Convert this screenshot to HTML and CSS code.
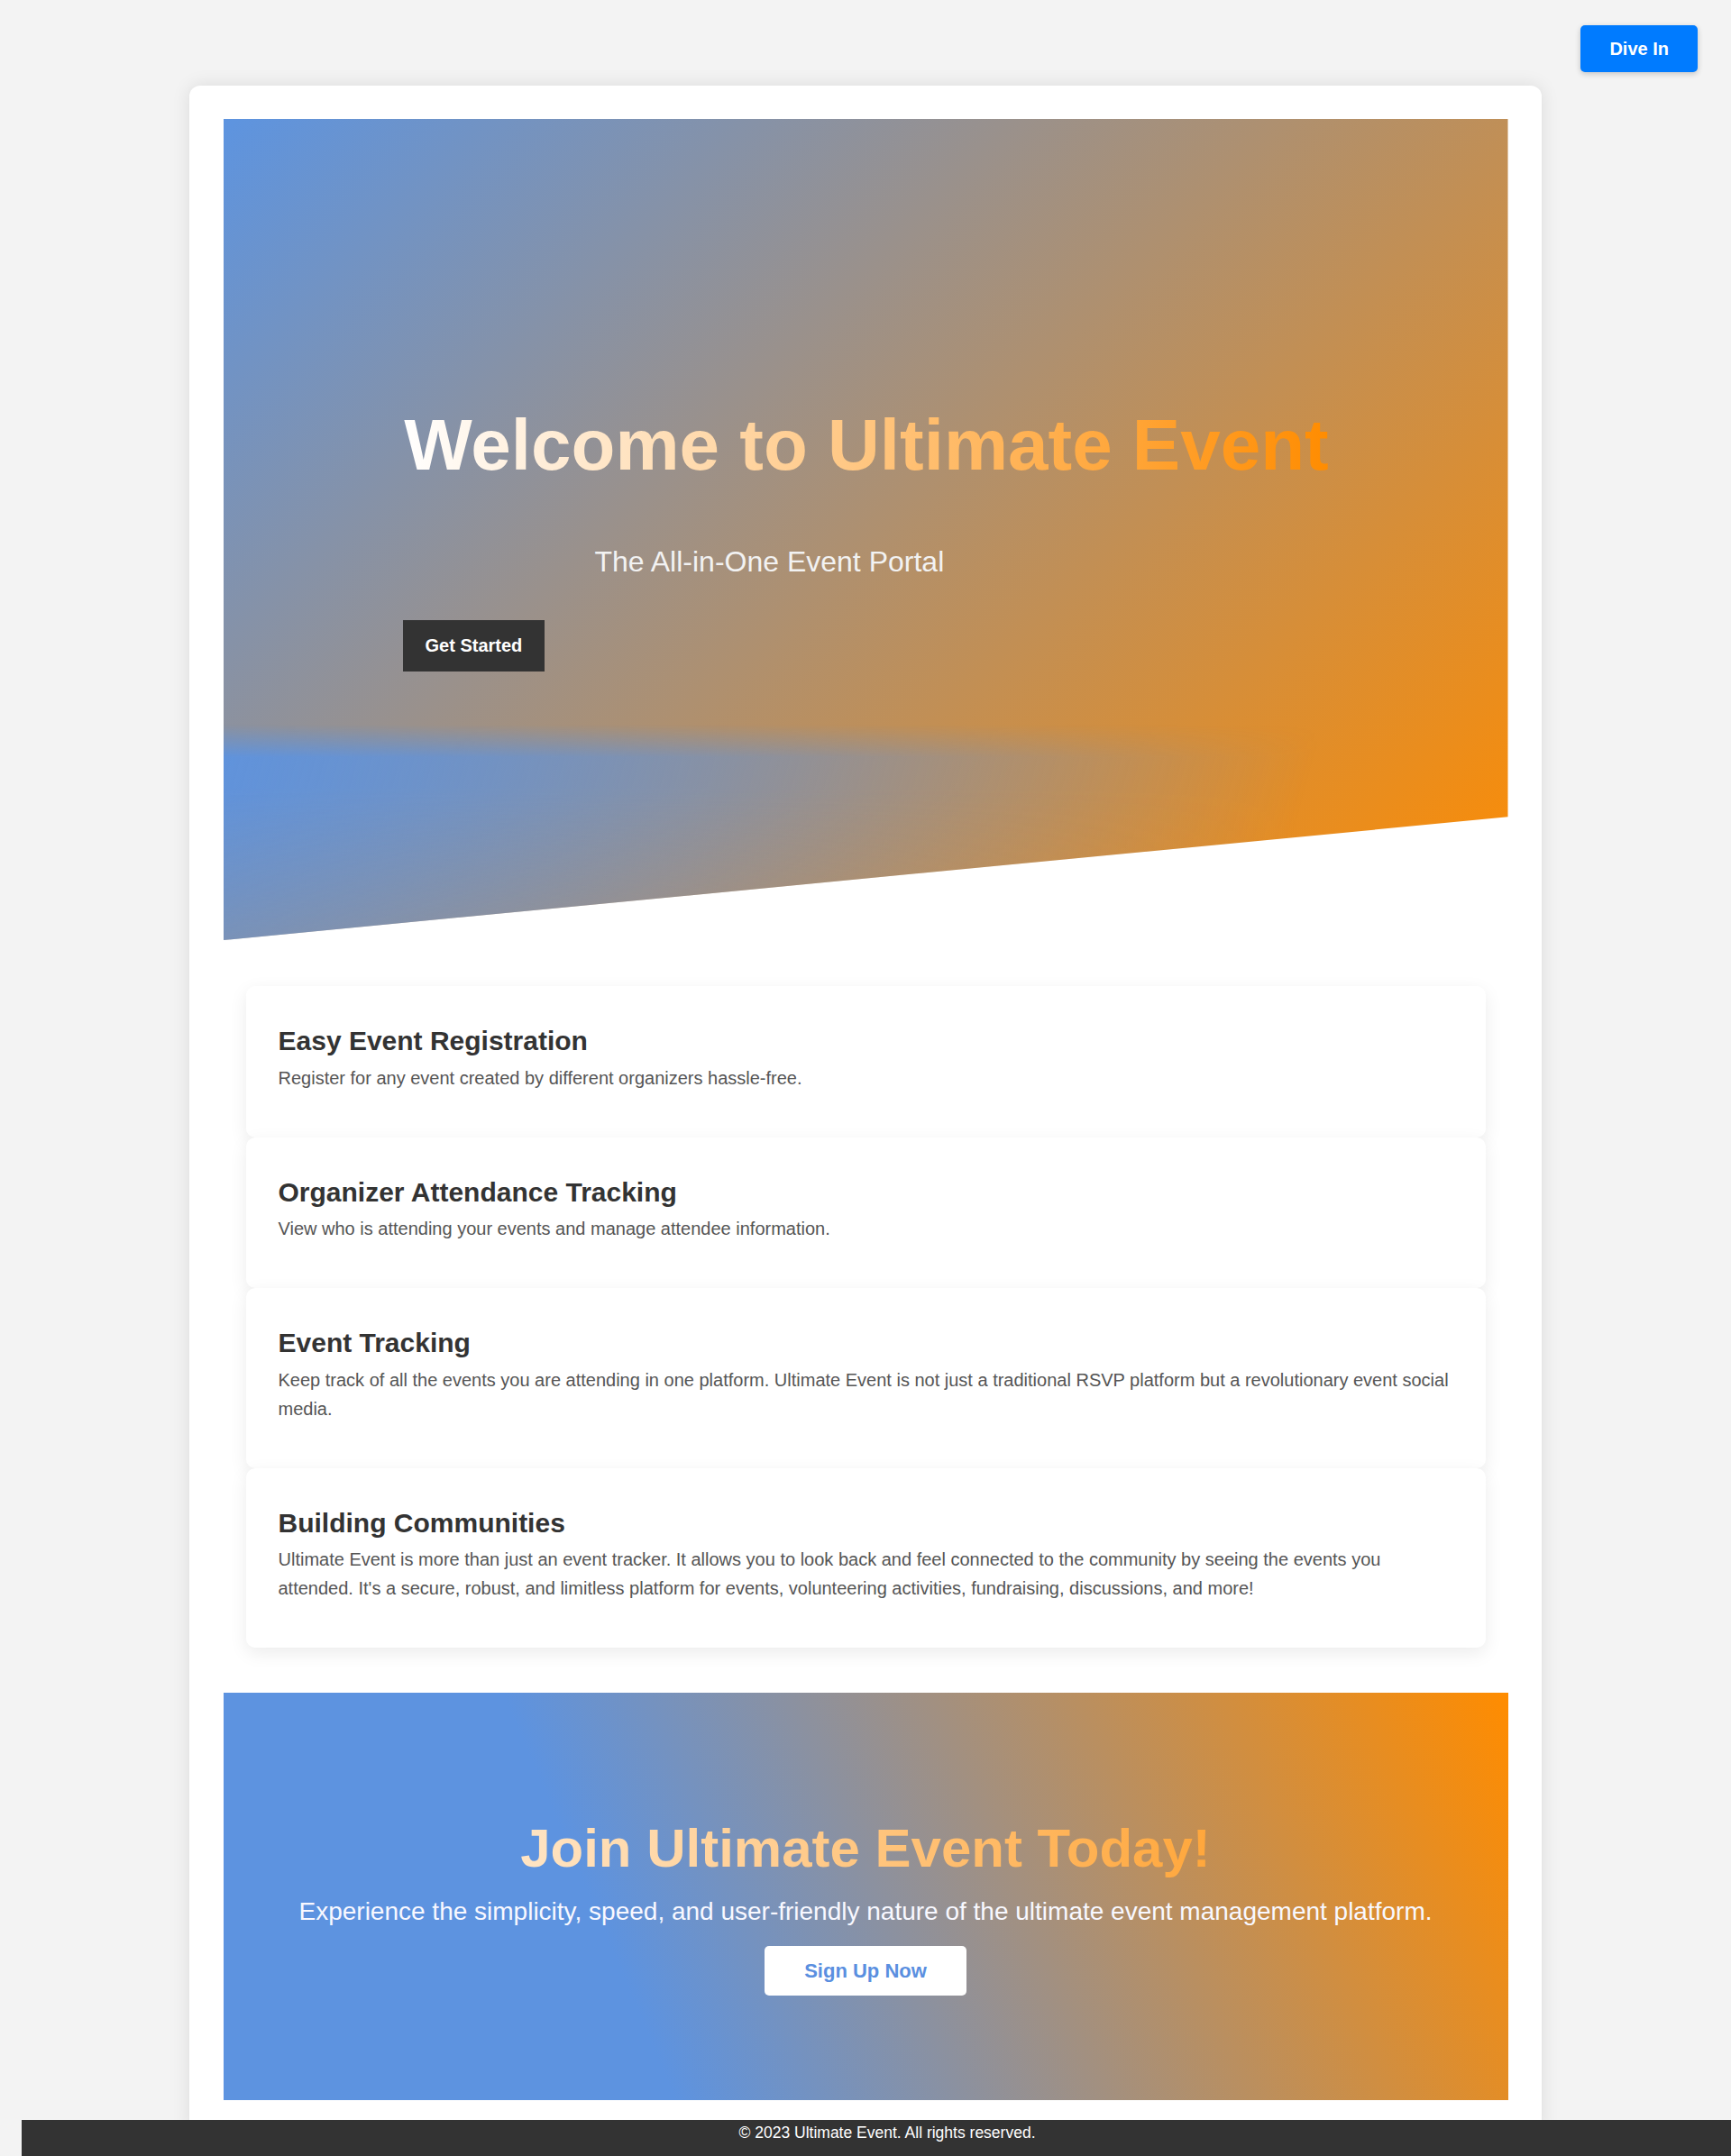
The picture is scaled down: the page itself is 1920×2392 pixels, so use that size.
FILE: index.html
```html
<!DOCTYPE html>
<html lang="en">
<head>
<meta charset="utf-8">
<title>Ultimate Event</title>
<link rel="stylesheet" href="styles.css">
</head>
<body>
<header class="topbar">
  <a class="dive-btn" href="#">Dive In</a>
</header>
<main class="page-card">
  <section class="hero">
    <div class="hero-content">
      <h1 class="hero-title">Welcome to Ultimate Event</h1>
      <p class="hero-subtitle">The All-in-One Event Portal</p>
      <a class="hero-btn" href="#">Get Started</a>
    </div>
  </section>
  <section class="features">
    <div class="feature-card">
      <h3>Easy Event Registration</h3>
      <p>Register for any event created by different organizers hassle-free.</p>
    </div>
    <div class="feature-card">
      <h3>Organizer Attendance Tracking</h3>
      <p>View who is attending your events and manage attendee information.</p>
    </div>
    <div class="feature-card">
      <h3>Event Tracking</h3>
      <p>Keep track of all the events you are attending in one platform. Ultimate Event is not just a traditional RSVP platform but a revolutionary event social media.</p>
    </div>
    <div class="feature-card">
      <h3>Building Communities</h3>
      <p>Ultimate Event is more than just an event tracker. It allows you to look back and feel connected to the community by seeing the events you attended. It's a secure, robust, and limitless platform for events, volunteering activities, fundraising, discussions, and more!</p>
    </div>
  </section>
  <section class="cta">
    <h2 class="cta-title">Join Ultimate Event Today!</h2>
    <p class="cta-text">Experience the simplicity, speed, and user-friendly nature of the ultimate event management platform.</p>
    <a class="cta-btn" href="#">Sign Up Now</a>
  </section>
</main>
<footer class="site-footer">© 2023 Ultimate Event. All rights reserved.</footer>
</body>
</html>
```
FILE: styles.css
```css
body {
  margin: 8px;
  background: #f3f3f3;
  font-family: "Liberation Sans", Arial, sans-serif;
}

.topbar {
  display: flex;
  justify-content: flex-end;
  padding: 20px 29px 0 0;
}

.dive-btn {
  display: block;
  height: 52px;
  line-height: 52px;
  padding: 0 32px;
  background: #007bff;
  color: #fff;
  font-size: 20px;
  font-weight: 700;
  text-decoration: none;
  border-radius: 5px;
  box-shadow: 0 2px 6px rgba(0, 0, 0, 0.2);
}

.page-card {
  display: block;
  max-width: 1500px;
  box-sizing: border-box;
  margin: 15px auto 0;
  padding: 37px 37.5px 37.5px;
  background: #fff;
  border-radius: 12px;
  box-shadow: 0 0 20px rgba(0, 0, 0, 0.1);
}

/* Hero */
.hero {
  position: relative;
  height: 911px;
  box-sizing: border-box;
  padding: 316px 197px 0 199px;
  background: linear-gradient(135deg, #5d94e0 0%, #ff8c00 100%);
  clip-path: polygon(0 0, 100% 0, 100% 85%, 0 100%);
}

.hero::after {
  content: "";
  position: absolute;
  left: 0;
  right: 0;
  top: 672px;
  bottom: 0;
  pointer-events: none;
  background: linear-gradient(105deg, rgba(92, 147, 225, 0.92) 0%, rgba(92, 147, 225, 0.45) 42%, rgba(92, 147, 225, 0) 82%);
  -webkit-mask-image: linear-gradient(to bottom, transparent 0, #000 36px, #000 70px, rgba(0, 0, 0, 0.62) 100%);
  mask-image: linear-gradient(to bottom, transparent 0, #000 36px, #000 70px, rgba(0, 0, 0, 0.62) 100%);
}

.hero-title {
  margin: 0;
  font-size: 80px;
  line-height: 92px;
  font-weight: 700;
  text-align: center;
  white-space: nowrap;
  background: linear-gradient(to right, #ffffff, #ff8c00);
  -webkit-background-clip: text;
  background-clip: text;
  color: transparent;
  -webkit-text-fill-color: transparent;
}

.hero-subtitle {
  margin: 65px 0 0 213px;
  font-size: 32px;
  line-height: 37px;
  color: #f2f2f2;
}

.hero-btn {
  display: block;
  width: fit-content;
  margin-top: 46px;
  padding: 17px 25px;
  line-height: 23px;
  background: #333;
  color: #fff;
  font-size: 20px;
  font-weight: 700;
  text-decoration: none;
}

/* Features */
.features {
  padding: 51px 25px 50px;
}

.feature-card {
  padding: 44px 36px 50px;
  background: #fff;
  border-radius: 10px;
  box-shadow: 0 6px 20px rgba(0, 0, 0, 0.08);
}

.feature-card h3 {
  margin: 0 0 7px;
  font-size: 30px;
  line-height: 34.5px;
  font-weight: 700;
  color: #333;
}

.feature-card p {
  margin: 0;
  font-size: 20px;
  line-height: 32px;
  color: #555;
}

/* CTA */
.cta {
  padding: 138px 0 116px;
  text-align: center;
  background: linear-gradient(67deg, #5d93e0 31%, #ff8c00 100%);
}

.cta-title {
  margin: 0 0 20px;
  font-size: 60px;
  line-height: 69px;
  font-weight: 700;
  background: linear-gradient(to right, #ffffff, #ff8c00);
  -webkit-background-clip: text;
  background-clip: text;
  color: transparent;
  -webkit-text-fill-color: transparent;
}

.cta-text {
  margin: 0 0 22px;
  font-size: 28px;
  line-height: 32px;
  color: #f8f8ff;
}

.cta-btn {
  display: block;
  width: fit-content;
  margin: 0 auto;
  padding: 15px 44px;
  line-height: 25px;
  background: #fff;
  color: #5a8fe0;
  font-size: 22px;
  font-weight: 700;
  text-decoration: none;
  border-radius: 5px;
}

/* Footer */
.site-footer {
  position: fixed;
  left: 24px;
  right: 0;
  bottom: 0;
  height: 40px;
  box-sizing: border-box;
  padding: 4px 0 0 24px;
  background: #333;
  color: #fff;
  text-align: center;
  font-size: 17.5px;
  line-height: 20px;
}
```
